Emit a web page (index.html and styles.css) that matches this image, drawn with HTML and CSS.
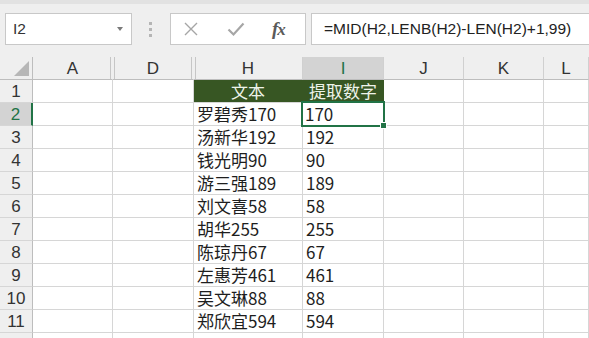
FILE: index.html
```html
<!DOCTYPE html>
<html lang="zh-CN">
<head>
    <meta charset="UTF-8">
    <title>提取数字</title>
    <link rel="stylesheet" href="styles.css">
</head>
<body>

    <div class="toolbar">
        <div class="name-box">
            <span>I2</span>
            <span class="drop-arrow"></span>
        </div>
        <div class="grip"><i></i><i></i><i></i></div>
        <div class="fx-buttons">
            <svg class="btn-icon" width="16" height="16" viewBox="0 0 16 16">
                <path d="M2 2 L14 14 M14 2 L2 14" stroke="#a6a6a6" stroke-width="1.4" fill="none"/>
            </svg>
            <svg class="btn-icon" width="18" height="16" viewBox="0 0 18 16">
                <path d="M1.5 8.5 L6.5 13.5 L16.5 2.5" stroke="#a6a6a6" stroke-width="2.2" fill="none"/>
            </svg>
            <span class="fx">f<span class="fx-x">x</span></span>
        </div>
        <div class="formula">=MID(H2,LENB(H2)-LEN(H2)+1,99)</div>
    </div>

    <div class="sheet">
        <div class="row head-row">
            <div class="corner"><span class="corner-tri"></span></div>
            <div class="col-head hidden-next">A</div>
            <div class="col-head hidden-next">D</div>
            <div class="col-head">H</div>
            <div class="col-head selected">I</div>
            <div class="col-head">J</div>
            <div class="col-head">K</div>
            <div class="col-head">L</div>
        </div>

        <div class="row">
            <div class="row-head">1</div>
            <div class="cell"></div>
            <div class="cell"></div>
            <div class="cell title center">文本</div>
            <div class="cell title center">提取数字</div>
            <div class="cell"></div>
            <div class="cell"></div>
            <div class="cell"></div>
        </div>
        <div class="row">
            <div class="row-head selected">2</div>
            <div class="cell"></div>
            <div class="cell"></div>
            <div class="cell">罗碧秀170</div>
            <div class="cell active">170</div>
            <div class="cell"></div>
            <div class="cell"></div>
            <div class="cell"></div>
        </div>
        <div class="row">
            <div class="row-head">3</div>
            <div class="cell"></div>
            <div class="cell"></div>
            <div class="cell">汤新华192</div>
            <div class="cell">192</div>
            <div class="cell"></div>
            <div class="cell"></div>
            <div class="cell"></div>
        </div>
        <div class="row">
            <div class="row-head">4</div>
            <div class="cell"></div>
            <div class="cell"></div>
            <div class="cell">钱光明90</div>
            <div class="cell">90</div>
            <div class="cell"></div>
            <div class="cell"></div>
            <div class="cell"></div>
        </div>
        <div class="row">
            <div class="row-head">5</div>
            <div class="cell"></div>
            <div class="cell"></div>
            <div class="cell">游三强189</div>
            <div class="cell">189</div>
            <div class="cell"></div>
            <div class="cell"></div>
            <div class="cell"></div>
        </div>
        <div class="row">
            <div class="row-head">6</div>
            <div class="cell"></div>
            <div class="cell"></div>
            <div class="cell">刘文喜58</div>
            <div class="cell">58</div>
            <div class="cell"></div>
            <div class="cell"></div>
            <div class="cell"></div>
        </div>
        <div class="row">
            <div class="row-head">7</div>
            <div class="cell"></div>
            <div class="cell"></div>
            <div class="cell">胡华255</div>
            <div class="cell">255</div>
            <div class="cell"></div>
            <div class="cell"></div>
            <div class="cell"></div>
        </div>
        <div class="row">
            <div class="row-head">8</div>
            <div class="cell"></div>
            <div class="cell"></div>
            <div class="cell">陈琼丹67</div>
            <div class="cell">67</div>
            <div class="cell"></div>
            <div class="cell"></div>
            <div class="cell"></div>
        </div>
        <div class="row">
            <div class="row-head">9</div>
            <div class="cell"></div>
            <div class="cell"></div>
            <div class="cell">左惠芳461</div>
            <div class="cell">461</div>
            <div class="cell"></div>
            <div class="cell"></div>
            <div class="cell"></div>
        </div>
        <div class="row">
            <div class="row-head">10</div>
            <div class="cell"></div>
            <div class="cell"></div>
            <div class="cell">吴文琳88</div>
            <div class="cell">88</div>
            <div class="cell"></div>
            <div class="cell"></div>
            <div class="cell"></div>
        </div>
        <div class="row">
            <div class="row-head">11</div>
            <div class="cell"></div>
            <div class="cell"></div>
            <div class="cell">郑欣宜594</div>
            <div class="cell">594</div>
            <div class="cell"></div>
            <div class="cell"></div>
            <div class="cell"></div>
        </div>
        <div class="row">
            <div class="row-head"></div>
            <div class="cell"></div>
            <div class="cell"></div>
            <div class="cell"></div>
            <div class="cell"></div>
            <div class="cell"></div>
            <div class="cell"></div>
            <div class="cell"></div>
        </div>
    </div>

</body>
</html>
```

FILE: styles.css
```css
body { margin: 0; background-color: #ffffff; font-family: 'Liberation Sans', 'Noto Sans CJK SC', sans-serif; overflow: hidden; }

/* formula bar */
.toolbar { height: 44px; border-top: 4px solid #e2e2e2; background-color: #efefef; display: flex; align-items: flex-start; padding-top: 9px; padding-left: 5px; box-sizing: content-box; }
.name-box { width: 127px; height: 32px; box-sizing: border-box; background: #ffffff; border: 1px solid #c8c8c8; display: flex; align-items: center; justify-content: space-between; padding: 0 8px 0 7px; font-size: 15.5px; color: #333; }
.drop-arrow { width: 0; height: 0; border-left: 3.5px solid transparent; border-right: 3.5px solid transparent; border-top: 4px solid #7a7a7a; }
.grip { display: flex; flex-direction: column; gap: 3px; margin: 9px 0 0 17px; }
.grip i { display: block; width: 3px; height: 3px; background-color: #b5b5b5; }
.fx-buttons { width: 136px; height: 32px; box-sizing: border-box; margin-left: 18px; background: #ffffff; border: 1px solid #c8c8c8; display: flex; align-items: center; padding-left: 12px; }
.btn-icon { margin-right: 28px; }
.btn-icon + .btn-icon { margin-right: 27px; }
.fx { font-family: 'Liberation Serif', serif; font-style: italic; font-weight: bold; font-size: 19px; color: #5a5a5a; letter-spacing: -1px; }
.fx-x { font-size: 17px; }
.formula { flex: 1; height: 32px; box-sizing: border-box; margin-left: 5px; background: #ffffff; border: 1px solid #c8c8c8; border-right: none; display: flex; align-items: center; padding-left: 12px; font-size: 15.5px; color: #222; white-space: nowrap; }

/* grid */
.row { display: grid; grid-template-columns: 33px 80px 81px 109px 81px 80px 80px 1fr; height: 23px; }
.row > div { box-sizing: border-box; border-right: 1px solid #d6d6d6; border-bottom: 1px solid #d6d6d6; height: 23px; }

.head-row > div { background-color: #efefef; border-bottom-color: #bdbdbd; border-right-color: #d0d0d0; font-size: 17px; color: #333; display: flex; align-items: center; justify-content: center; padding-top: 1px; }
.corner { position: relative; border-right-color: #bdbdbd !important; }
.corner-tri { position: absolute; right: 3px; bottom: 3px; width: 0; height: 0; border-left: 15px solid transparent; border-bottom: 15px solid #b7b7b7; }
.hidden-next { position: relative; border-right-color: transparent !important; }
.hidden-next::after { content: ""; position: absolute; top: 0; bottom: 0; right: -3px; width: 3px; border-left: 1px solid #c6c6c6; border-right: 1px solid #c6c6c6; z-index: 1; }
.col-head.selected { background-color: #d3d3d3; color: #217346; }

.row-head { background-color: #efefef; border-right-color: #bdbdbd !important; border-bottom-color: #d6d6d6; font-size: 17px; color: #333; display: flex; align-items: center; justify-content: center; padding-top: 1px; }
.row-head.selected { background-color: #d3d3d3; color: #217346; border-right: 2px solid #217346 !important; }

.cell { font-family: 'Noto Sans CJK SC', sans-serif; font-size: 17px; color: #1e1e1e; line-height: 22px; padding-left: 3px; white-space: nowrap; overflow: visible; }
.cell.title { background-color: #375623; border-right-color: #375623; color: #eef3ea; }
.center { text-align: center; padding-left: 0; }

.cell.active { position: relative; padding-left: 2px; }
.cell.active::before { content: ""; position: absolute; top: -2px; left: -2px; right: -2px; bottom: -2px; border: 2px solid #217346; }
.cell.active::after { content: ""; position: absolute; right: -4px; bottom: -4px; width: 5px; height: 5px; background-color: #217346; border: 1px solid #ffffff; z-index: 2; }
```
